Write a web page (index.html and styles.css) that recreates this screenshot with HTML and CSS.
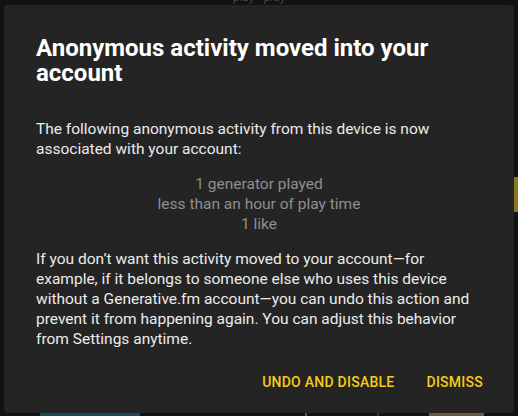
FILE: index.html
```html
<!DOCTYPE html>
<html>
<head>
<meta charset="utf-8">
<link rel="stylesheet" href="styles.css">
</head>
<body>
<div class="page">
  <div class="topstrip"><span class="ghost">play · play</span></div>
  <div class="middle">
    <div class="dialog">
      <h2 class="title">Anonymous activity moved into your account</h2>
      <p class="text">The following anonymous activity from this device is now associated with your account:</p>
      <div class="stats">
        <div>1 generator played</div>
        <div>less than an hour of play time</div>
        <div>1 like</div>
      </div>
      <p class="text">If you don’t want this activity moved to your account—for example, if it belongs to someone else who uses this device without a Generative.fm account—you can undo this action and prevent it from happening again. You can adjust this behavior from Settings anytime.</p>
      <div class="actions">
        <button class="btn">Undo and disable</button>
        <button class="btn">Dismiss</button>
      </div>
    </div>
    <div class="side"><div class="sidebar-tab"></div></div>
  </div>
  <div class="bottomstrip">
    <div class="tile t1"></div>
    <div class="tile t2"></div>
    <div class="tile t3"></div>
    <div class="tile t4"></div>
  </div>
</div>
</body>
</html>
```

FILE: styles.css
```css
* { box-sizing: border-box; }
html, body { margin: 0; padding: 0; }
body {
  background: #121212;
  font-family: Roboto, "Liberation Sans", sans-serif;
  width: 518px;
  height: 416px;
  overflow: hidden;
}
.page {
  display: flex;
  flex-direction: column;
  height: 416px;
}
.topstrip {
  height: 5px;
  display: flex;
  justify-content: center;
  overflow: hidden;
}
.ghost {
  color: #444;
  font-size: 12px;
  line-height: 12px;
  margin-top: -9px;
}
.middle {
  display: flex;
  flex: 1;
  padding-left: 4px;
}
.dialog {
  width: 510px;
  height: 408px;
  background: #242424;
  border-radius: 4px;
  padding: 31px 32px 0 32px;
  display: flex;
  flex-direction: column;
}
.side {
  flex: 1;
  padding-top: 172px;
}
.sidebar-tab {
  height: 35px;
  background: #8a7620;
}
.title {
  margin: 0;
  color: #ffffff;
  font-size: 24px;
  font-weight: 700;
  line-height: 25px;
}
.text {
  margin: 33px 0 0 0;
  color: #ebebeb;
  font-size: 15.5px;
  line-height: 20px;
}
.stats {
  margin-top: 15px;
  text-align: center;
  color: #8f8f8f;
  font-size: 15.5px;
  line-height: 20px;
}
.stats + .text { margin-top: 15px; }
.actions {
  display: flex;
  justify-content: flex-end;
  gap: 16px;
  margin-top: 17px;
  margin-right: -9px;
}
.btn {
  background: none;
  border: none;
  color: #f6cc1a;
  font-family: Roboto, "Liberation Sans", sans-serif;
  font-size: 14px;
  font-weight: 500;
  text-transform: uppercase;
  letter-spacing: 0.25px;
  padding: 6px 8px;
  line-height: 20px;
}
.bottomstrip {
  height: 3px;
  display: flex;
  padding-left: 28px;
  gap: 10px;
}
.tile { height: 3px; }
.t1 { width: 100px; margin-left: 12px; background: #1a4a60; }
.t2 { width: 2px; margin-left: 155px; background: #2a7070; }
.t3 { width: 2px; margin-left: 60px; background: #333; }
.t4 { width: 55px; margin-left: 40px; background: #6a5a40; }
```
